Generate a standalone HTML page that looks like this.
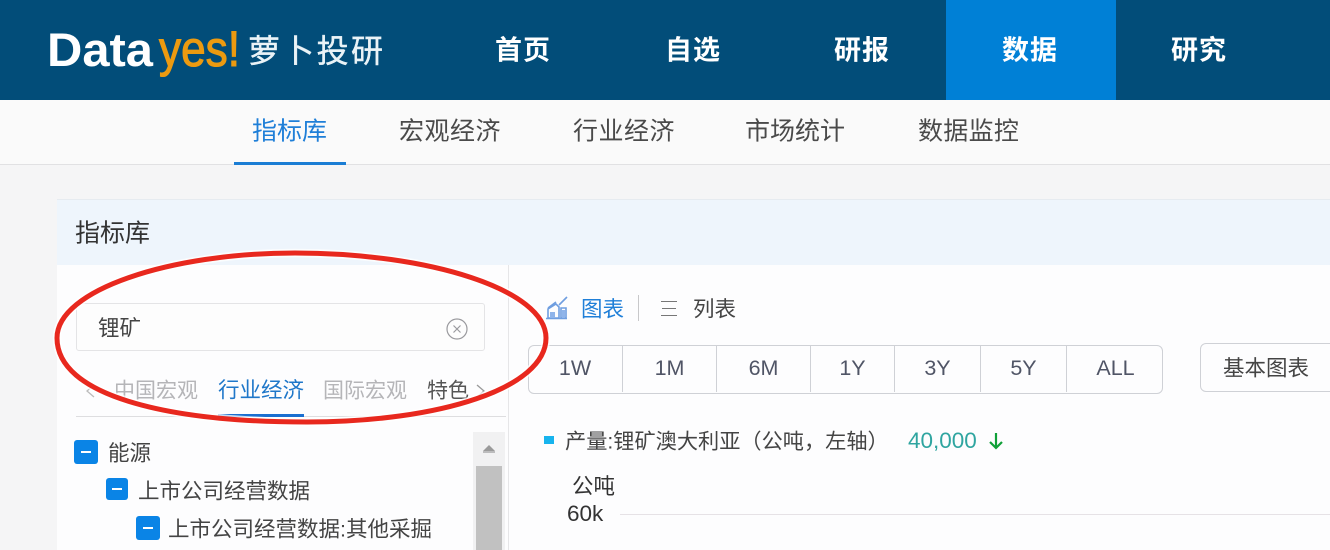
<!DOCTYPE html>
<html lang="zh"><head><meta charset="utf-8"><title>Datayes</title>
<style>
html,body{margin:0;padding:0}
body{width:1330px;height:550px;overflow:hidden;position:relative;background:#f5f5f6;font-family:"Liberation Sans","Noto Sans CJK SC",sans-serif;color:#444}
#w{position:absolute;left:0;top:0;width:1330px;height:550px;filter:blur(.35px)}
.a{position:absolute}
.t{position:absolute;white-space:nowrap;line-height:1;transform:translateY(-50%)}
.nav{font-size:27px;color:#fff;font-weight:700;top:51px}
.sub{font-size:25px;color:#4a4a4a;top:132px}
.btn{position:absolute;top:345px;height:47px;border-left:1px solid #cfd1d6;font-size:21.5px;line-height:47px;text-align:center;color:#505566}
.chk{position:absolute;background:#0a84e6;border-radius:3px}
.chk:after{content:"";position:absolute;left:28%;right:28%;top:calc(50% - 1px);height:2px;background:#fff}
.tr{font-size:21.5px;color:#444}
</style></head><body><div id="w">
<div class="a" style="left:0;top:0;width:1330px;height:100px;background:#024d79"></div>
<div class="a" style="left:946px;top:0;width:170px;height:100px;background:#0080d6"></div>
<svg class="a" style="left:0;top:0" width="400" height="100">
<text x="47" y="66" font-family="Liberation Sans" font-size="47" font-weight="700" fill="#fff" textLength="106" lengthAdjust="spacingAndGlyphs">Data</text>
<text x="159" y="66" font-family="Liberation Sans" font-size="50" fill="#ec9a10" stroke="#ec9a10" stroke-width="1.1" textLength="81" lengthAdjust="spacingAndGlyphs">yes!</text>
<text x="248" y="62" font-family="Noto Sans CJK SC" font-size="32" fill="#eaf3f7" stroke="#eaf3f7" stroke-width=".4" textLength="135" lengthAdjust="spacing">萝卜投研</text>
</svg>
<span class="t nav" style="left:495px;letter-spacing:1px">首页</span>
<span class="t nav" style="left:665px;letter-spacing:1px">自选</span>
<span class="t nav" style="left:834px;letter-spacing:1px">研报</span>
<span class="t nav" style="left:1002px;letter-spacing:1px">数据</span>
<span class="t nav" style="left:1171px;letter-spacing:1px">研究</span>

<div class="a" style="left:0;top:100px;width:1330px;height:64px;background:#fafafa;border-bottom:1px solid #e1e1e3"></div>
<span class="t sub" style="left:252px;color:#1f7fd8">指标库</span>
<span class="t sub" style="left:399px;letter-spacing:.5px">宏观经济</span>
<span class="t sub" style="left:573px;letter-spacing:.5px">行业经济</span>
<span class="t sub" style="left:745px">市场统计</span>
<span class="t sub" style="left:918px;letter-spacing:.3px">数据监控</span>
<div class="a" style="left:234px;top:162px;width:112px;height:3px;background:#1a7dd4"></div>

<div class="a" style="left:57px;top:199px;width:1273px;height:351px;background:#fdfdfe"></div>
<div class="a" style="left:57px;top:199px;width:1273px;height:66px;background:#eef5fc;border-top:1px solid #e6ebf0;box-sizing:border-box"></div>
<span class="t" style="left:75px;top:234px;font-size:25px;color:#333">指标库</span>
<div class="a" style="left:508px;top:265px;width:1px;height:285px;background:#e6e6e8"></div>

<div class="a" style="left:76px;top:303px;width:407px;height:46px;border:1px solid #e4e4e6;border-radius:3px;background:#fdfdfd"></div>
<span class="t" style="left:98px;top:329px;font-size:21.5px;color:#444">锂矿</span>
<svg class="a" style="left:445px;top:317px" width="24" height="24" fill="none" stroke="#9a9a9e"><circle cx="12" cy="12" r="10" stroke-width="1.2"/><path d="M8.5 8.5l7 7M15.5 8.5l-7 7" stroke-width="1.2"/></svg>

<svg class="a" style="left:84px;top:382px" width="14" height="18" fill="none" stroke="#bbb" stroke-width="1.3"><path d="M10 3l-7 6 7 6"/></svg>
<span class="t" style="left:114px;top:391px;font-size:21px;color:#b5b5b8">中国宏观</span>
<span class="t" style="left:218px;top:391px;font-size:21.5px;color:#1f77c9">行业经济</span>
<span class="t" style="left:323px;top:391px;font-size:21px;color:#b5b5b8">国际宏观</span>
<span class="t" style="left:427px;top:391px;font-size:21px;color:#555">特色</span>
<svg class="a" style="left:474px;top:382px" width="14" height="18" fill="none" stroke="#999" stroke-width="1.3"><path d="M3 3l7 6-7 6"/></svg>
<div class="a" style="left:76px;top:416px;width:430px;height:1px;background:#dedee0"></div>
<div class="a" style="left:218px;top:414px;width:86px;height:3px;background:#1a6fd0"></div>

<div class="chk" style="left:74px;top:440px;width:24px;height:24px"></div>
<span class="t tr" style="left:108px;top:454px">能源</span>
<div class="chk" style="left:106px;top:478px;width:22px;height:22px"></div>
<span class="t tr" style="left:138px;top:492px">上市公司经营数据</span>
<div class="chk" style="left:136px;top:516px;width:24px;height:24px"></div>
<span class="t tr" style="left:168px;top:530px">上市公司经营数据:其他采掘</span>

<div class="a" style="left:473px;top:432px;width:32px;height:118px;background:#f1f1f2"></div>
<div class="a" style="left:476px;top:466px;width:26px;height:84px;background:#c1c1c1"></div>
<svg class="a" style="left:481px;top:443px" width="16" height="12"><path d="M8 2l6 6H2z" fill="#9a9a9a"/><path d="M2 9h12" stroke="#888"/></svg>

<svg class="a" style="left:545px;top:295px" width="24" height="26" fill="none" stroke="#6f9ee0" stroke-width="1.6"><path d="M3 23V14l8-5 3 3v11zM16 23V13h5v10zM1 23.5h21M3 13l8-6M14 10l8-8" /><path d="M5 23v-6h5v6zM17 23v-8h3v8z" fill="#8fb4ea" stroke="none"/></svg>
<span class="t" style="left:581px;top:310px;font-size:21.5px;color:#1f7fd8">图表</span>
<div class="a" style="left:638px;top:295px;width:1px;height:26px;background:#c8c8ca"></div>
<span class="a" style="left:661px;top:301px;width:16px;height:1px;background:#777"></span>
<span class="a" style="left:662px;top:308px;width:14px;height:1px;background:#777"></span>
<span class="a" style="left:661px;top:315px;width:16px;height:1px;background:#777"></span>
<span class="t" style="left:693px;top:310px;font-size:21.5px;color:#444">列表</span>

<div class="a" style="left:528px;top:345px;width:633px;height:47px;border:1px solid #cfd1d6;border-radius:6px;box-sizing:content-box;background:#fdfdfe"></div>
<div class="btn" style="left:528px;width:94px;border-left:0">1W</div>
<div class="btn" style="left:622px;width:93px">1M</div>
<div class="btn" style="left:716px;width:93px">6M</div>
<div class="btn" style="left:810px;width:83px">1Y</div>
<div class="btn" style="left:894px;width:85px">3Y</div>
<div class="btn" style="left:980px;width:85px">5Y</div>
<div class="btn" style="left:1066px;width:97px">ALL</div>
<div class="a" style="left:1200px;top:343px;width:140px;height:47px;border:1px solid #cfd1d6;border-radius:6px;background:#fdfdfe"></div>
<span class="t" style="left:1223px;top:369px;font-size:21.5px;color:#444">基本图表</span>

<div class="a" style="left:544px;top:436px;width:10px;height:8px;background:#18b4ee"></div>
<span class="t" style="left:565px;top:442px;font-size:21.2px;color:#444">产量:锂矿澳大利亚（公吨，左轴）</span>
<span class="t" style="left:908px;top:441px;font-size:22.5px;color:#2fa5a0">40,000</span>
<svg class="a" style="left:987px;top:431px" width="18" height="20" fill="none" stroke="#10a038" stroke-width="2.2"><path d="M9 2v15M3 11l6 6 6-6"/></svg>
<span class="t" style="left:572px;top:487px;font-size:21.5px;color:#333">公吨</span>
<span class="t" style="left:567px;top:514px;font-size:22.5px;color:#333">60k</span>
<div class="a" style="left:620px;top:514px;width:710px;height:1px;background:#e6e2e6"></div>

<svg class="a" style="left:0;top:0" width="1330" height="550" fill="none">
<path id="e" d="M57 338C57 395 165 422 307 422C440 422 546 388 546 338C546 290 430 253 295 253C170 253 57 290 57 338Z" stroke="#fff" stroke-width="8.5" opacity=".75"/>
<path d="M57 338C57 395 165 422 307 422C440 422 546 388 546 338C546 290 430 253 295 253C170 253 57 290 57 338Z" stroke="#e8281e" stroke-width="5"/>
</svg>
</div></body></html>
